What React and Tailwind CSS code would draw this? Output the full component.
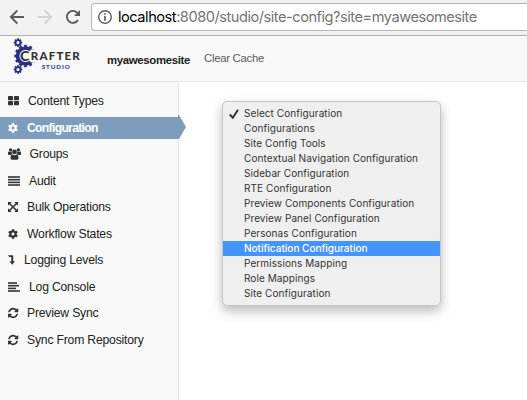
import React from "react";
import { FaCog } from "react-icons/fa";

const REFRESH =
  "M1511 1056q0 5-1 7-64 268-268 434.5t-478 166.5q-146 0-282.5-55t-243.5-157l-129 129q-19 19-45 19t-45-19-19-45v-448q0-26 19-45t45-19h448q26 0 45 19t19 45-19 45l-137 137q71 66 161 102t187 36q134 0 250-65t186-179q11-17 53-117 8-23 30-23h192q13 0 22.5 9.5t9.5 22.5zm25-800v448q0 26-19 45t-45 19h-448q-26 0-45-19t-19-45 19-45l138-138q-148-137-349-137-134 0-250 65t-186 179q-11 17-53 117-8 23-30 23h-199q-13 0-22.5-9.5t-9.5-22.5v-7q65-268 270-434.500t480-166.500q146 0 284 55.500t245 156.500l130-129q19-19 45-19t45 19 19 45z";

const Grid = () => (
  <svg className="h-[11px] w-[11px]" viewBox="0 0 11 11" fill="currentColor">
    <rect x="0" y="1" width="5" height="4.200" rx=".8" />
    <rect x="6" y="1" width="5" height="4.200" rx=".8" />
    <rect x="0" y="6" width="5" height="4.200" rx=".8" />
    <rect x="6" y="6" width="5" height="4.200" rx=".8" />
  </svg>
);
const Gear = () => <FaCog className="h-[10px] w-[10px]" />;
const Group = () => (
  <svg className="h-[12px] w-[13px]" viewBox="0 0 13 12" fill="currentColor">
    <circle cx="2.600" cy="2" r="1.700" />
    <circle cx="10.400" cy="2" r="1.700" />
    <circle cx="6.500" cy="3.900" r="2.400" />
    <path d="M0 6.300V4.700Q0 3.400 1 3.500Q2.500 4.500 3.700 3.800Q3.700 5.300 4.400 6.200Q3.400 6.300 2.800 7H1Q0 7 0 6.300ZM13 6.300V4.700Q13 3.400 12 3.500Q10.500 4.500 9.300 3.800Q9.300 5.300 8.600 6.200Q9.600 6.300 10.200 7H12Q13 7 13 6.300Z" />
    <path d="M2.500 10Q2.500 6.600 4.300 6.500Q6.500 8 8.700 6.500Q10.500 6.600 10.500 10Q10.500 11.700 9 11.700H4Q2.500 11.700 2.500 10Z" />
  </svg>
);
const Justify = () => (
  <svg className="h-[10px] w-[12px]" viewBox="0 0 12 10" fill="currentColor">
    <rect y=".2" width="12" height="1.600" />
    <rect y="2.900" width="12" height="1.600" />
    <rect y="5.600" width="12" height="1.600" />
    <rect y="8.200" width="12" height="1.600" />
  </svg>
);
const Left = () => (
  <svg className="h-[10px] w-[12px]" viewBox="0 0 12 10" fill="currentColor">
    <rect y=".2" width="9" height="1.600" />
    <rect y="2.900" width="11" height="1.600" />
    <rect y="5.600" width="8" height="1.600" />
    <rect y="8.200" width="12" height="1.600" />
  </svg>
);
const Expand = () => (
  <svg className="h-[10px] w-[10px]" viewBox="0 0 10 10" fill="currentColor">
    <path d="M0 0H3.800L0 3.800ZM10 0V3.800L6.200 0ZM0 10V6.200L3.800 10ZM10 10H6.200L10 6.200Z" />
    <path d="M1.500 1.500L8.500 8.500M8.500 1.500L1.500 8.500" stroke="currentColor" strokeWidth="1.500" />
  </svg>
);
const Level = () => (
  <svg className="h-[10px] w-[7px]" viewBox="0 0 7 10" fill="currentColor">
    <path d="M0 .3H4.500Q5.200 .3 5.200 1V6.300H7L4.200 9.800L1.500 6.300H3.300V2H1.300Z" />
  </svg>
);
const Refresh = () => (
  <svg className="h-[12px] w-[12px] -ml-[0.5px]" viewBox="0 0 1792 1792" fill="currentColor">
    <path d={REFRESH} />
  </svg>
);

const NAV = [
  { label: "Content Types", Icon: Grid, pad: "pl-[28px]", h: "h-[27px]" },
  { label: "Configuration", Icon: Gear, pad: "pl-[27px]", h: "h-[27px]", active: true },
  { label: "Groups", Icon: Group, pad: "pl-[29.5px]", h: "h-[26px]" },
  { label: "Audit", Icon: Justify, pad: "pl-[29px]", h: "h-[27px]" },
  { label: "Bulk Operations", Icon: Expand, pad: "pl-[27px]", h: "h-[26px]" },
  { label: "Workflow States", Icon: Gear, pad: "pl-[27px]", h: "h-[27px]" },
  { label: "Logging Levels", Icon: Level, pad: "pl-[24px]", h: "h-[26px]" },
  { label: "Log Console", Icon: Left, pad: "pl-[29px]", h: "h-[27px]" },
  { label: "Preview Sync", Icon: Refresh, pad: "pl-[27px]", h: "h-[26px]" },
  { label: "Sync From Repository", Icon: Refresh, pad: "pl-[27px]", h: "h-[27px]" },
];

const OPTIONS = [
  "Select Configuration",
  "Configurations",
  "Site Config Tools",
  "Contextual Navigation Configuration",
  "Sidebar Configuration",
  "RTE Configuration",
  "Preview Components Configuration",
  "Preview Panel Configuration",
  "Personas Configuration",
  "Notification Configuration",
  "Permissions Mapping",
  "Role Mappings",
  "Site Configuration",
];

function Cog({ cx, cy, r, hole, teeth, tooth }) {
  return (
    <g transform={`translate(${cx} ${cy})`}>
      {Array.from({ length: teeth }, (_, i) => (
        <rect
          key={i}
          x={-tooth / 2}
          y={-r - tooth * 0.5}
          width={tooth}
          height={tooth}
          transform={`rotate(${(i * 360) / teeth})`}
          fill="#2b3180"
        />
      ))}
      <circle r={(r + hole) / 2} fill="none" stroke="#2b3180" strokeWidth={r - hole} />
    </g>
  );
}

function Logo() {
  return (
    <svg className="h-[38px] w-[68px] shrink-0" viewBox="0 0 68 38">
      <Cog cx={5} cy={5.600} r={3.300} hole={1.600} teeth={8} tooth={1.900} />
      <Cog cx={5} cy={32.500} r={3.300} hole={1.600} teeth={8} tooth={1.900} />
      <Cog cx={12.500} cy={19} r={9.800} hole={5.200} teeth={12} tooth={2.800} />
      <path d="M12.500 19L18 12.500H28V25.500H18Z" fill="#f8f8f8" />
      <g fontFamily="Lato, sans-serif" fontWeight="900">
        <text x="7" y="23.800" fontSize="14" fill="#333" stroke="#f8f8f8" strokeWidth="2" paintOrder="stroke">C</text>
        <text x="17.800" y="23.300" fontSize="11.500" fill="#333" textLength="49">RAFTER</text>
        <text x="28.700" y="32" fontSize="6.200" fill="#363d91" textLength="28">STUDIO</text>
      </g>
    </svg>
  );
}

function BrowserBar() {
  return (
    <div className="flex h-[36px] items-start border-b border-[#b1b1b1] bg-[#f2f2f2] pl-[9px]">
      <svg className="mt-[8px] h-[18px] w-[73px] shrink-0" viewBox="0 0 73 18" fill="none" strokeWidth="1.800">
        <path d="M15 9H2M8.300 2.500L1.800 9L8.300 15.500" stroke="#5a5a5a" />
        <path d="M29 9H42M35.700 2.500L42.200 9L35.700 15.500" stroke="#d2d2d2" />
        <path d="M69 12A6 6 0 1 1 68.300 4.800L70 6.500" stroke="#5a5a5a" />
        <path d="M71 2V8H65Z" fill="#5a5a5a" />
      </svg>
      <div className="ml-[9px] mt-[3px] flex h-[28px] flex-1 items-center rounded-l-[4px] border border-r-0 border-[#b4b4b4] bg-white pl-[5px]">
        <svg className="h-[16px] w-[16px] shrink-0" viewBox="0 0 16 16" fill="none" stroke="#5f5f5f" strokeWidth="1.400">
          <circle cx="8" cy="8" r="6.300" />
          <path d="M8 7V11.700M8 4.200V5.700" strokeWidth="1.700" />
        </svg>
        <span className="ml-[5px] whitespace-nowrap font-['Inter',sans-serif] text-[14.6px] leading-[26px] tracking-[-0.47px] text-[#747474]">
          <span className="text-black">localhost</span>:8080/studio/site-config?site=myawesomesite
        </span>
      </div>
    </div>
  );
}

export default function App() {
  return (
    <div className="flex h-[400px] w-[527px] flex-col overflow-hidden bg-white font-['Liberation_Sans',Arial,sans-serif]">
      <BrowserBar />
      <header className="flex h-[46px] shrink-0 items-start border-b border-[#e5e5e5] bg-[#f8f8f8] pl-[13px]">
        <div className="mt-[1px]"><Logo /></div>
        <span className="ml-[26px] mt-[16px] w-[83px] whitespace-nowrap text-[11.4px] font-bold leading-[16px] tracking-[-0.33px] text-[#222]">myawesomesite</span>
        <span className="ml-[14px] mt-[14px] text-[11.4px] leading-[16px] tracking-[-0.3px] text-[#5c5c5c]">Clear Cache</span>
      </header>
      <div className="flex min-h-0 flex-1">
        <nav className="w-[179px] shrink-0 border-r border-[#e5e5e5] bg-[#f8f8f8] pt-[5px]">
          {NAV.map(({ label, Icon, pad, h, active }) => (
            <div key={label} className={`relative flex items-center ${h} ${pad}`}>
              {active && (
                <>
                  <div className="absolute inset-x-0 top-[3px] h-[22px] w-[179px] bg-[#7e9dbd]" />
                  <svg className="absolute left-[178px] top-[1px] h-[24px] w-[8px]" viewBox="0 0 8 24">
                    <path d="M0 0H1L8 12L1 24H0Z" fill="#7e9dbd" />
                  </svg>
                </>
              )}
              <span className={`absolute left-[8px] flex h-full items-center ${active ? "text-white" : "text-[#333]"}`}>
                <Icon />
              </span>
              <span
                className={`relative whitespace-nowrap text-[12.2px] leading-[16px] ${
                  active ? "font-bold tracking-[-0.7px] text-white" : "tracking-[-0.2px] text-[#222]"
                }`}
              >
                {label}
              </span>
            </div>
          ))}
        </nav>
        <main className="flex-1 pl-[43px] pt-[19px]">
          <div className="h-[205px] w-[219px] rounded-[5px] border border-[#c3c7c6] bg-[#efefef] pt-[4px] shadow-[0_5px_12px_rgba(0,0,0,0.28)]">
            {OPTIONS.map((option, i) => (
              <div
                key={option}
                className={`flex h-[15px] items-center ${i === 9 ? "bg-[#4594fc] font-medium text-white" : "text-[#333]"}`}
              >
                <span className="flex w-[21px] justify-center">
                  {i === 0 && (
                    <svg className="h-[10px] w-[10px]" viewBox="0 0 10 10" fill="none" stroke="currentColor" strokeWidth="2">
                      <path d="M.8 5.500L3.800 8.700L9 .8" />
                    </svg>
                  )}
                </span>
                <span
                  className={`whitespace-nowrap font-['Inter',sans-serif] text-[10px] leading-[15px] ${
                    i === 9 ? "tracking-[0px]" : "tracking-[0.08px]"
                  }`}
                >
                  {option}
                </span>
              </div>
            ))}
          </div>
        </main>
      </div>
    </div>
  );
}
